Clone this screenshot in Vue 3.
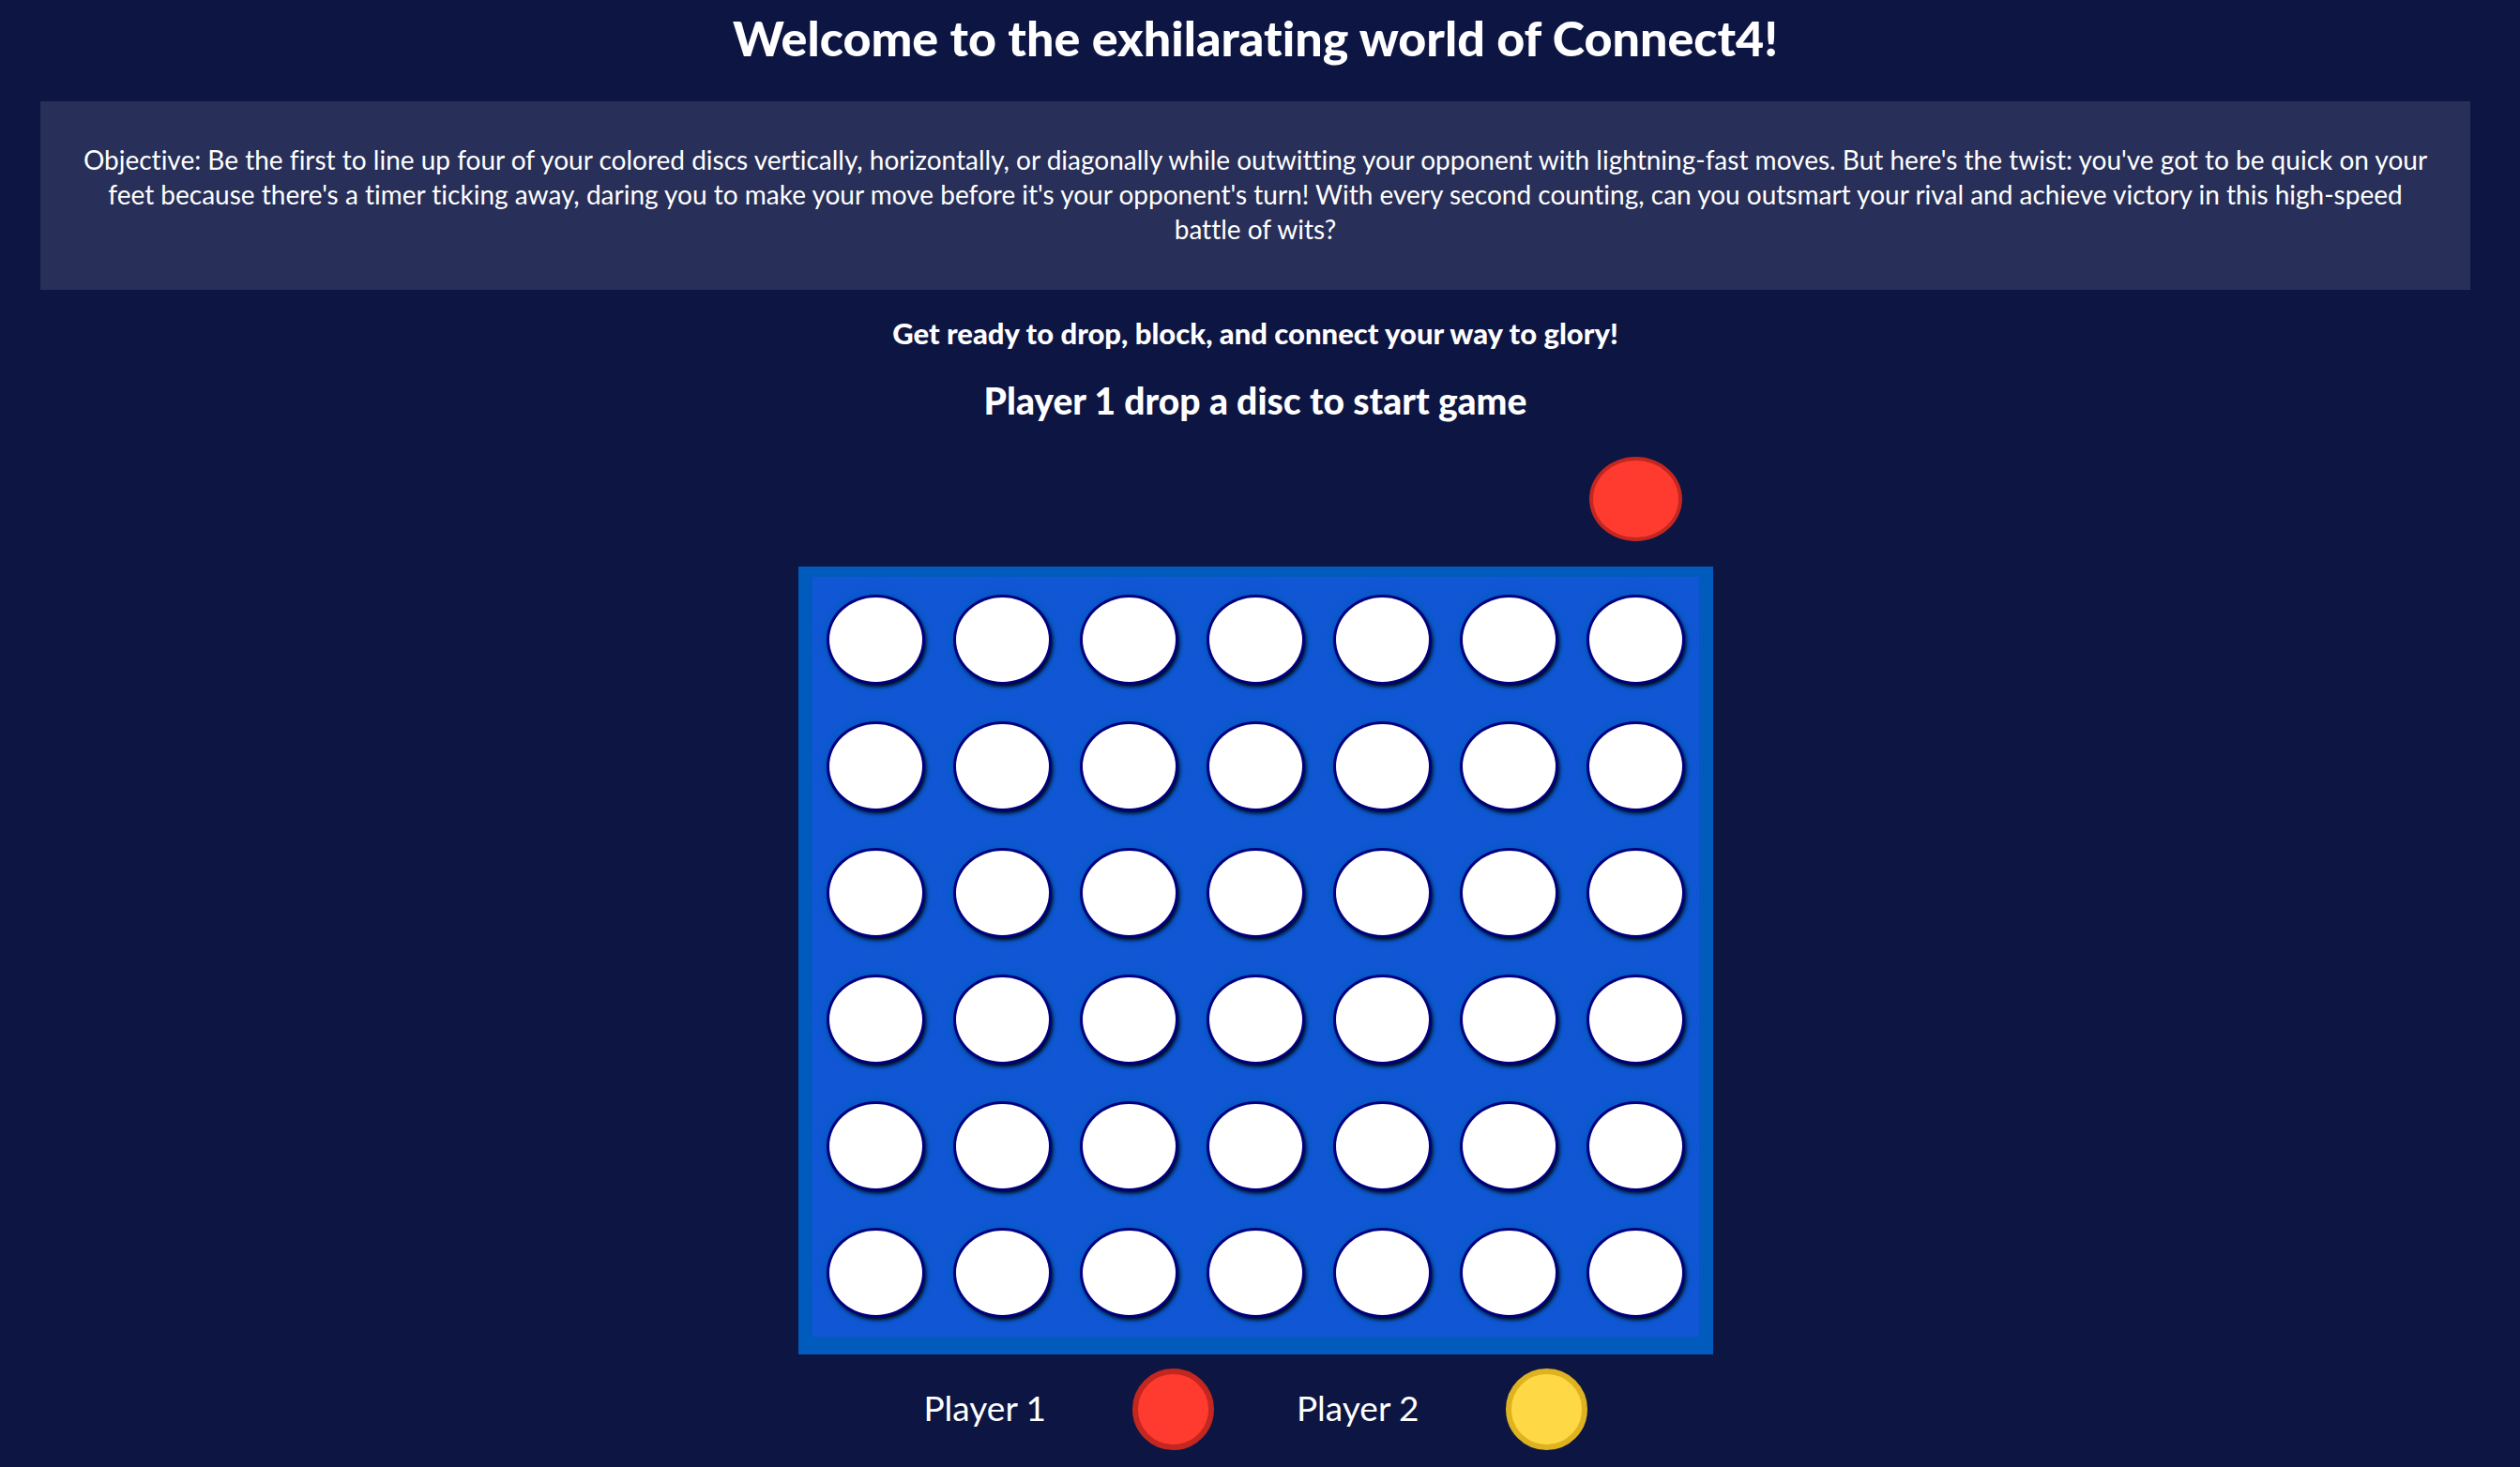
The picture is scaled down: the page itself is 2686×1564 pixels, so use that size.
<script setup>
const rows = 6
const columns = 7
const players = [
  { name: 'Player 1', color: 'red' },
  { name: 'Player 2', color: 'yellow' },
]
</script>

<template>
  <main class="page">
    <h1 class="title">Welcome to the exhilarating world of Connect4!</h1>
    <p class="objective">
      Objective: Be the first to line up four of your colored discs vertically, horizontally, or diagonally while outwitting your opponent with lightning-fast moves. But here's the twist: you've got to be quick on your feet because there's a timer ticking away, daring you to make your move before it's your opponent's turn! With every second counting, can you outsmart your rival and achieve victory in this high-speed battle of wits?
    </p>
    <h3 class="tagline">Get ready to drop, block, and connect your way to glory!</h3>
    <h2 class="status">Player 1 drop a disc to start game</h2>

    <section class="game">
      <div class="tray">
        <div class="slot"><span class="disc red"></span></div>
      </div>
      <div class="board">
        <div v-for="row in rows" :key="row" class="row">
          <div v-for="column in columns" :key="column" class="cell">
            <button class="hole" type="button" :aria-label="`Row ${row}, column ${column}`"></button>
          </div>
        </div>
      </div>
    </section>

    <footer class="players">
      <div v-for="player in players" :key="player.name" class="player">
        <span class="name">{{ player.name }}</span>
        <span class="token" :class="player.color"></span>
      </div>
    </footer>
  </main>
</template>

<style>
body {
  margin: 0;
  background: #0d1543;
}
</style>

<style scoped>
.page {
  box-sizing: border-box;
  min-height: 100vh;
  padding: 10px 53px 16px 43px;
  display: flex;
  flex-direction: column;
  align-items: center;
  color: #fff;
  font-family: Lato, "Open Sans", sans-serif;
  font-variant-ligatures: none;
  text-align: center;
}

.title {
  margin: 0;
  font-size: 52px;
  line-height: 60px;
  font-weight: 900;
}

.objective {
  box-sizing: border-box;
  width: 100%;
  margin: 38px 0 0;
  padding: 44px 45px 46px;
  background: #282f59;
  font-size: 28px;
  line-height: 37px;
}

.tagline {
  margin: 28px 0 0;
  font-size: 31px;
  line-height: 36px;
  font-weight: 900;
}

.status {
  margin: 30px 0 0;
  font-size: 39px;
  line-height: 48px;
  font-weight: 900;
}

.game {
  display: flex;
  flex-direction: column;
}

.tray {
  display: flex;
  justify-content: flex-end;
  padding: 13px 15px 5px;
}

.slot,
.cell {
  box-sizing: border-box;
  display: flex;
  align-items: center;
  justify-content: center;
  width: 135px;
  height: 135px;
}

.cell {
  padding-bottom: 1px;
}

.disc,
.token {
  box-sizing: border-box;
  border-style: solid;
  border-radius: 50%;
}

.disc {
  width: 99px;
  height: 90px;
  border-width: 4px;
}

.token {
  width: 87px;
  height: 87px;
  border-width: 6px;
}

.red {
  background: #ff3b30;
  border-color: #c42720;
}

.yellow {
  background: #ffd845;
  border-color: #dfb320;
}

.board {
  padding: 11px 15px 19px;
  background: #005bbd;
}

.row {
  display: flex;
  background: #1157d5;
}

.hole {
  width: 99px;
  height: 90px;
  padding: 0;
  border: 0;
  border-radius: 50%;
  background: #fff;
  box-shadow: 0 0 0 3px #000080, 2px 3px 4px 2px #000, 0 0 12px 4px #005bbd;
}

.players {
  display: flex;
  gap: 88px;
  padding-top: 15px;
}

.player {
  display: flex;
  align-items: center;
  gap: 92px;
}

.name {
  padding-bottom: 4px;
  font-size: 37px;
  line-height: 48px;
}
</style>
